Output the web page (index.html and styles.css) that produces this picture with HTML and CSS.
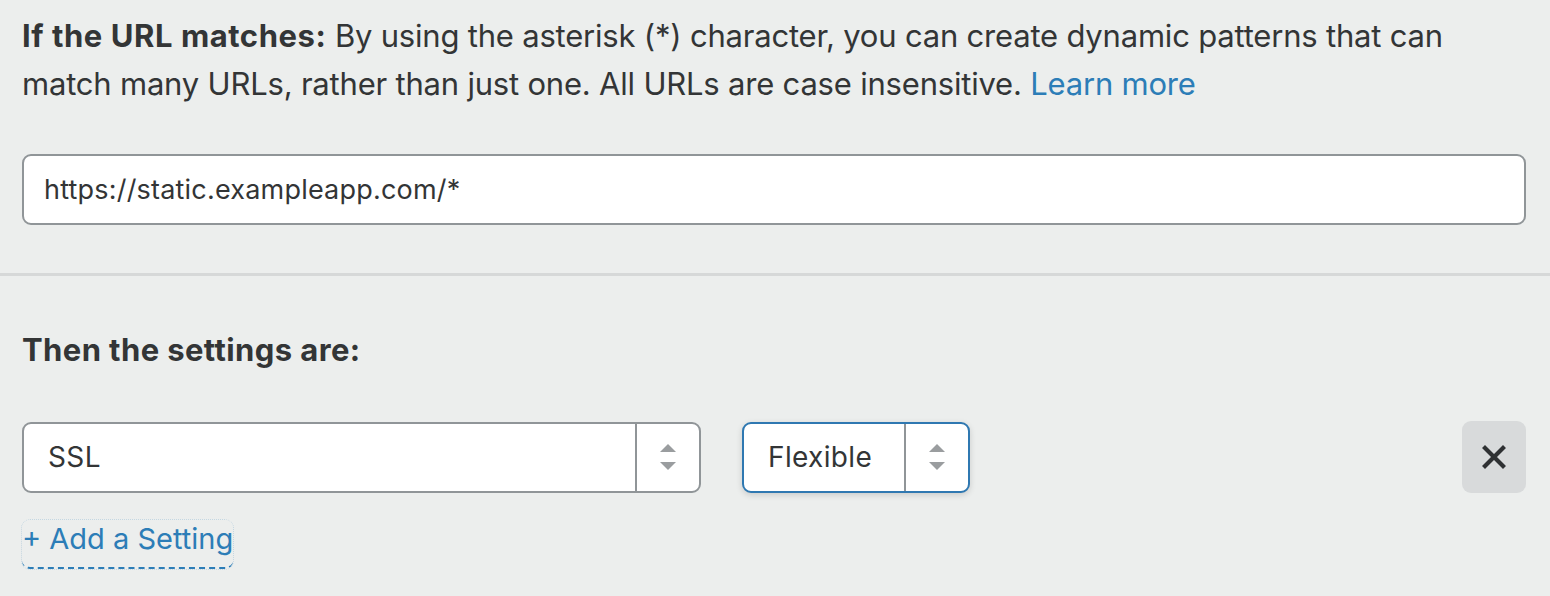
FILE: index.html
```html
<!DOCTYPE html>
<html>
<head>
<meta charset="utf-8">
<link rel="stylesheet" href="styles.css">
</head>
<body>
<div class="page">
  <section class="match">
    <p class="intro"><strong>If the URL matches:</strong> By using the asterisk (*) character, you can create dynamic patterns that can match many URLs, rather than just one. All URLs are case insensitive. <a class="link" href="#">Learn more</a></p>
    <div class="url-input">https://static.exampleapp.com/*</div>
  </section>
  <div class="divider"></div>
  <section class="settings">
    <h2 class="heading">Then the settings are:</h2>
    <div class="row">
      <div class="select select-wide">
        <span class="select-value">SSL</span>
        <span class="select-arrows"><svg width="18" height="26" viewBox="0 0 18 26"><path d="M9 0 L17 8 L1 8 Z" fill="#9a9d9f"/><path d="M9 26 L17 18 L1 18 Z" fill="#9a9d9f"/></svg></span>
      </div>
      <div class="select select-narrow focused">
        <span class="select-value">Flexible</span>
        <span class="select-arrows"><svg width="18" height="26" viewBox="0 0 18 26"><path d="M9 0 L17 8 L1 8 Z" fill="#9a9d9f"/><path d="M9 26 L17 18 L1 18 Z" fill="#9a9d9f"/></svg></span>
      </div>
      <div class="spacer"></div>
      <button class="remove"><svg width="24" height="24" viewBox="0 0 24 24"><path d="M3 3 L21 21 M21 3 L3 21" stroke="#2f3133" stroke-width="4.2" stroke-linecap="square"/></svg></button>
    </div>
    <a class="add" href="#">+ Add a Setting</a>
  </section>
</div>
</body>
</html>
```
FILE: styles.css
```css
html, body {
  margin: 0;
  padding: 0;
  background: #eceeed;
}
body {
  font-family: Inter, "Open Sans", "Liberation Sans", sans-serif;
  color: #333536;
}
.page {
  width: 1550px;
  height: 596px;
  overflow: hidden;
}
.match {
  padding: 12px 60px 48px 22px;
}
.intro {
  margin: 0;
  font-size: 31px;
  line-height: 48px;
  letter-spacing: -0.2px;
}
.intro strong {
  font-weight: 700;
  letter-spacing: 0.55px;
}
.link {
  color: #2c7db7;
  text-decoration: none;
}
.url-input {
  margin-top: 46px;
  margin-right: -36px;
  height: 67px;
  border: 2px solid #909598;
  border-radius: 9px;
  background: #fff;
  display: flex;
  align-items: center;
  padding-left: 20px;
  font-size: 27px;
  letter-spacing: 0.2px;
}
.divider {
  height: 3px;
  background: #d6d8d8;
}
.settings {
  padding: 50px 24px 0 22px;
}
.heading {
  margin: 0;
  font-size: 31px;
  font-weight: 700;
  line-height: 48px;
  letter-spacing: 0.4px;
}
.row {
  margin-top: 47px;
  display: flex;
  align-items: center;
  gap: 41px;
}
.select {
  height: 67px;
  border: 2px solid #909598;
  border-radius: 9px;
  background: #fff;
  display: flex;
  align-items: stretch;
  font-size: 28px;
  letter-spacing: 0.35px;
  box-sizing: content-box;
}
.select-wide {
  width: 675px;
}
.select-narrow {
  width: 224px;
}
.select.focused {
  border-color: #2f78b1;
  box-shadow: 0 2px 6px rgba(0, 0, 0, 0.15);
}
.select-value {
  flex: 1;
  display: flex;
  align-items: center;
  padding-left: 24px;
}
.select-arrows {
  width: 62px;
  border-left: 2px solid #909598;
  display: flex;
  align-items: center;
  justify-content: center;
}
.spacer {
  flex: 1;
}
.remove {
  width: 64px;
  height: 72px;
  border: none;
  border-radius: 9px;
  background: #d8dadb;
  display: flex;
  align-items: center;
  justify-content: center;
  padding: 0;
}
.add {
  display: inline-block;
  margin-top: 27px;
  font-size: 29px;
  line-height: 38px;
  letter-spacing: 0;
  color: #2c7db7;
  text-decoration: none;
  border-bottom: 2px dashed #2c7db7;
  border-radius: 8px;
  outline: 1px dotted rgba(44, 125, 183, 0.2);
  outline-offset: 0;
  padding-bottom: 9px;
}
```
